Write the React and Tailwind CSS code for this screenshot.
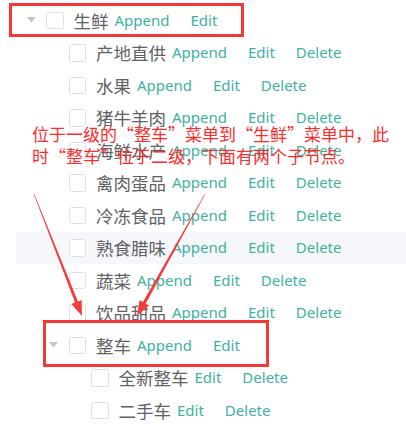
import React from "react";

const rows = [
  { level: 0, label: "生鲜", caret: true, btns: ["Append", "Edit"] },
  { level: 1, label: "产地直供", btns: ["Append", "Edit", "Delete"] },
  { level: 1, label: "水果", btns: ["Append", "Edit", "Delete"] },
  { level: 1, label: "猪牛羊肉", btns: ["Append", "Edit", "Delete"] },
  { level: 1, label: "海鲜水产", btns: ["Append", "Edit", "Delete"] },
  { level: 1, label: "禽肉蛋品", btns: ["Append", "Edit", "Delete"] },
  { level: 1, label: "冷冻食品", btns: ["Append", "Edit", "Delete"] },
  { level: 1, label: "熟食腊味", btns: ["Append", "Edit", "Delete"], hover: true },
  { level: 1, label: "蔬菜", btns: ["Append", "Edit", "Delete"] },
  { level: 1, label: "饮品甜品", btns: ["Append", "Edit", "Delete"] },
  { level: 1, label: "整车", caret: true, btns: ["Append", "Edit"] },
  { level: 2, label: "全新整车", btns: ["Edit", "Delete"] },
  { level: 2, label: "二手车", btns: ["Edit", "Delete"] },
];

const pads = ["pl-0", "pl-[22.5px]", "pl-[45px]"];

function Arrow({ x1, y1, x2, y2 }) {
  const dx = x2 - x1;
  const dy = y2 - y1;
  const len = Math.hypot(dx, dy);
  const ux = dx / len;
  const uy = dy / len;
  const nx = -uy;
  const ny = ux;
  const headLen = 15;
  const headW = 5.5;
  const bx = x2 - ux * headLen;
  const by = y2 - uy * headLen;
  const w0 = 0.3;
  const w1 = 1.6;
  const pts = [
    [x1 + nx * w0, y1 + ny * w0],
    [bx + nx * w1, by + ny * w1],
    [bx + nx * headW, by + ny * headW],
    [x2, y2],
    [bx - nx * headW, by - ny * headW],
    [bx - nx * w1, by - ny * w1],
    [x1 - nx * w0, y1 - ny * w0],
  ]
    .map((p) => p[0].toFixed(1) + "," + p[1].toFixed(1))
    .join(" ");
  return <polygon points={pts} fill="#f53b3b" />;
}

export default function App() {
  return (
    <div className="relative w-[406px] h-[435px] bg-white overflow-hidden">
      <div className="pt-[4px] pl-[16px]">
        {rows.map((r, i) => (
          <div
            key={i}
            className={`flex items-center h-[32.5px] ${pads[r.level]} ${r.hover ? "bg-[#f5f7fa]" : ""}`}
          >
            <div className="w-[30px] h-full flex items-center justify-center shrink-0">
              {r.caret && (
                <svg width="9" height="6" viewBox="0 0 9 6">
                  <polygon points="0,0 9,0 4.5,5.5" fill="#c0c4cc" />
                </svg>
              )}
            </div>
            <div className="w-[17.5px] h-[17.5px] border border-[#dcdfe6] rounded-[2.5px] bg-white shrink-0 mr-[10px]" />
            <span className="text-[17.5px] leading-none text-[#606266] font-['Noto_Sans_CJK_SC',sans-serif] whitespace-nowrap">
              {r.label}
            </span>
            <div className="flex items-center gap-[21px] ml-[6px] text-[15px] leading-none text-[#3fb1a1] font-['Noto_Sans',sans-serif] whitespace-nowrap">
              {r.btns.map((b) => (
                <span key={b}>{b}</span>
              ))}
            </div>
          </div>
        ))}
      </div>

      {/* annotation boxes */}
      <div className="absolute left-[9px] top-[3px] w-[235px] h-[34px] border-[3.5px] border-[#f43838]" />
      <div className="absolute left-[43px] top-[320px] w-[226px] h-[47px] border-[3.5px] border-[#f43838]" />

      {/* annotation text */}
      <div className="absolute left-[32px] top-[123px] text-[17px] leading-[22px] text-[#ff2b2b] font-['Noto_Sans_CJK_SC',sans-serif] whitespace-nowrap">
        <div>位于一级的“整车”菜单到“生鲜”菜单中，此</div>
        <div>时“整车”位于二级，下面有两个子节点。</div>
      </div>

      {/* arrows */}
      <svg className="absolute left-0 top-0" width="406" height="435" viewBox="0 0 406 435">
        <Arrow x1={34} y1={194} x2={82} y2={316} />
        <Arrow x1={205} y1={194} x2={137} y2={316} />
      </svg>
    </div>
  );
}
